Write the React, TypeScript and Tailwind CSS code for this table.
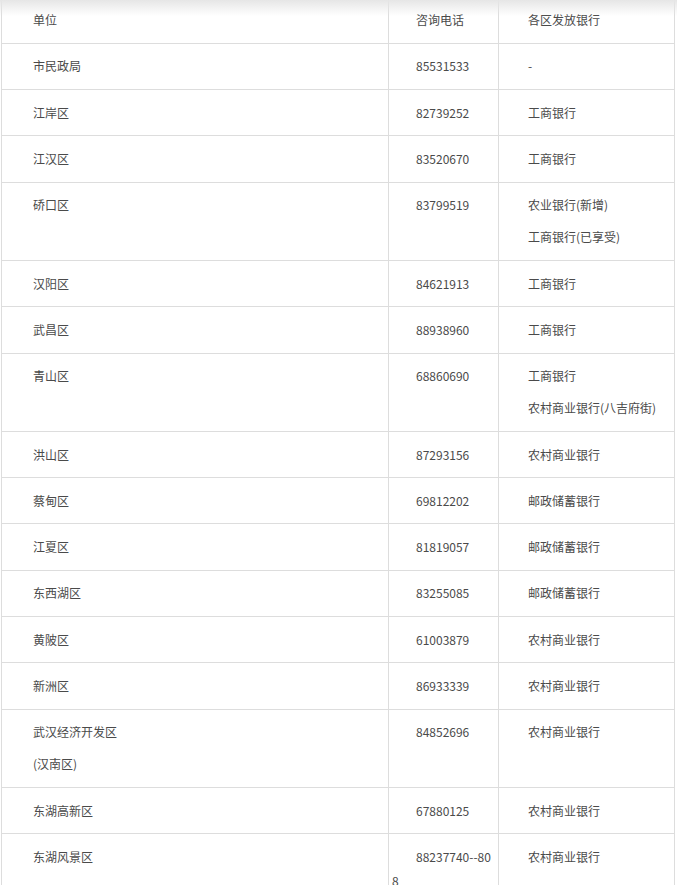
import React from "react";

type Row = { name: string[]; phone: string[]; bank: string[] };

const rows: Row[] = [
  { name: ["市民政局"], phone: ["85531533"], bank: ["-"] },
  { name: ["江岸区"], phone: ["82739252"], bank: ["工商银行"] },
  { name: ["江汉区"], phone: ["83520670"], bank: ["工商银行"] },
  { name: ["硚口区"], phone: ["83799519"], bank: ["农业银行(新增)", "工商银行(已享受)"] },
  { name: ["汉阳区"], phone: ["84621913"], bank: ["工商银行"] },
  { name: ["武昌区"], phone: ["88938960"], bank: ["工商银行"] },
  { name: ["青山区"], phone: ["68860690"], bank: ["工商银行", "农村商业银行(八吉府街)"] },
  { name: ["洪山区"], phone: ["87293156"], bank: ["农村商业银行"] },
  { name: ["蔡甸区"], phone: ["69812202"], bank: ["邮政储蓄银行"] },
  { name: ["江夏区"], phone: ["81819057"], bank: ["邮政储蓄银行"] },
  { name: ["东西湖区"], phone: ["83255085"], bank: ["邮政储蓄银行"] },
  { name: ["黄陂区"], phone: ["61003879"], bank: ["农村商业银行"] },
  { name: ["新洲区"], phone: ["86933339"], bank: ["农村商业银行"] },
  { name: ["武汉经济开发区", "(汉南区)"], phone: ["84852696"], bank: ["农村商业银行"] },
  { name: ["东湖高新区"], phone: ["67880125"], bank: ["农村商业银行"] },
];

function Lines({ lines }: { lines: string[] }) {
  return (
    <>
      {lines.map((l, i) => (
        <p key={i} className="my-[8px] leading-[24px] indent-[24px]">
          {l}
        </p>
      ))}
    </>
  );
}

function TableRow({ r }: { r: Row }) {
  return (
    <div className="grid grid-cols-[387px_110px_176px] border-b border-[#dddddd]">
      <div className="border-r border-[#dddddd] py-[2.67px] pl-[7px] pr-[5px]">
        <Lines lines={r.name} />
      </div>
      <div className="border-r border-[#dddddd] py-[2.67px] pl-[3px] pr-[3px]">
        <Lines lines={r.phone} />
      </div>
      <div className="border-r border-[#dddddd] py-[2.67px] pl-[5px] pr-[2px]">
        <Lines lines={r.bank} />
      </div>
    </div>
  );
}

export default function App() {
  return (
    <div
      className="relative h-[885px] w-[677px] overflow-hidden bg-white text-[12px] text-[#4a4a4a]"
      style={{ fontFamily: '"Noto Sans CJK SC", "Noto Sans", sans-serif' }}
    >
      <div className="ml-[1px] mt-[-2.67px] w-[674px] border-l border-[#dddddd]">
        <TableRow r={{ name: ["单位"], phone: ["咨询电话"], bank: ["各区发放银行"] }} />
        {rows.map((r, i) => (
          <TableRow key={i} r={r} />
        ))}
        <div className="grid grid-cols-[387px_110px_176px] border-b border-[#dddddd]">
          <div className="border-r border-[#dddddd] py-[2.67px] pl-[7px] pr-[5px]">
            <Lines lines={["东湖风景区"]} />
          </div>
          <div className="border-r border-[#dddddd] py-[2.67px] pl-[3px] pr-[3px]">
            <p className="my-[8px] leading-[24px] indent-[24px]">
              88237740--80
              <br />8
            </p>
          </div>
          <div className="border-r border-[#dddddd] py-[2.67px] pl-[5px] pr-[2px]">
            <Lines lines={["农村商业银行"]} />
          </div>
        </div>
      </div>
      <div className="pointer-events-none absolute left-0 top-0 h-[16px] w-full bg-gradient-to-b from-[#e6e6e6] to-transparent" />
    </div>
  );
}
